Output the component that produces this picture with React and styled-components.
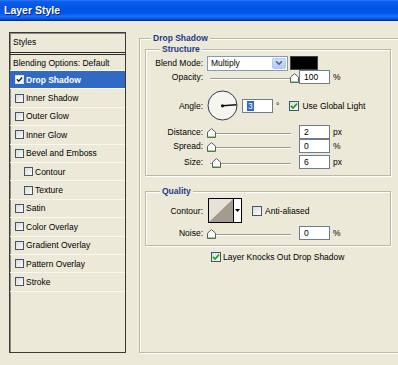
import React from "react";
import styled, { createGlobalStyle } from "styled-components";

const GlobalStyle = createGlobalStyle`
  body {
    margin: 0;
    background: #ece9d8;
    overflow: hidden;
  }
  * {
    box-sizing: border-box;
  }
`;

const styleItems = [
  { name: "Drop Shadow", checked: true, selected: true },
  { name: "Inner Shadow" },
  { name: "Outer Glow" },
  { name: "Inner Glow" },
  { name: "Bevel and Emboss" },
  { name: "Contour", indent: true },
  { name: "Texture", indent: true },
  { name: "Satin" },
  { name: "Color Overlay" },
  { name: "Gradient Overlay" },
  { name: "Pattern Overlay" },
  { name: "Stroke" },
];

function CheckBox({ checked, size = 10, onDark }) {
  return (
    <Box $size={size} $onDark={onDark}>
      {checked && (
        <svg width={size - 2} height={size - 2} viewBox="0 0 8 8">
          <path
            d="M1 3.8 L3.1 6 L7 1.6"
            fill="none"
            stroke={onDark ? "#222" : "#21a121"}
            strokeWidth="1.7"
          />
        </svg>
      )}
    </Box>
  );
}

function Slider({ pos }) {
  return (
    <SliderWrap>
      <Track />
      <Thumb style={{ left: 0 + pos * 83 }} width="9" height="10" viewBox="0 0 9 10">
        <path d="M0.5 9.5 V4.2 L4.5 0.6 L8.5 4.2 V9.5 Z" fill="#fff" stroke="#5b5b5b" />
        <path d="M1 9 H8" stroke="#3c9a3c" strokeWidth="1" />
      </Thumb>
    </SliderWrap>
  );
}

function SliderRow({ label, value, unit, pos, top }) {
  return (
    <Row $top={top}>
      <Label>{label}</Label>
      <Slider pos={pos} />
      <NumInput $gap={4}>{value}</NumInput>
      <Unit>{unit}</Unit>
    </Row>
  );
}

export default function App() {
  return (
    <Dialog>
      <GlobalStyle />
      <TitleBar>Layer Style</TitleBar>
      <Body>
        <StyleList>
          <ListHeader>Styles</ListHeader>
          <ListRow $height={16}>Blending Options: Default</ListRow>
          {styleItems.map((item) => (
            <ListRow
              key={item.name}
              $height={18.4}
              $indent={item.indent}
              $selected={item.selected}
            >
              <CheckBox size={9} checked={item.checked} onDark={item.selected} />
              {item.name}
            </ListRow>
          ))}
        </StyleList>

        <Frame>
          <Legend $left={6}>Drop Shadow</Legend>
          <Group $top={-1}>
            <Legend $left={14}>Structure</Legend>
            <Rows $pb={6}>
              <Row $top={1}>
                <Label>Blend Mode:</Label>
                <Select>
                  <span>Multiply</span>
                  <DropButton>
                    <svg width="8" height="6" viewBox="0 0 8 6">
                      <path d="M1 1.2 L4 4.2 L7 1.2" fill="none" stroke="#4d6185" strokeWidth="1.6" />
                    </svg>
                  </DropButton>
                </Select>
                <Swatch />
              </Row>
              <SliderRow label="Opacity:" value="100" unit="%" pos={1} />
              <Row $top={6} $height={31}>
                <Label>Angle:</Label>
                <Dial width="31" height="31" viewBox="0 0 31 31">
                  <circle cx="15.5" cy="15.5" r="14.5" fill="#f6f5f0" stroke="#2e3b52" />
                  <line x1="15.5" y1="15.8" x2="29.5" y2="14.8" stroke="#111" strokeWidth="1.5" />
                  <circle cx="15.5" cy="15.8" r="1.6" fill="#111" />
                </Dial>
                <NumInput $gap={4}>
                  <Selected>3</Selected>
                </NumInput>
                <Unit>°</Unit>
                <CheckLabel $gap={10}>
                  <CheckBox checked />
                  Use Global Light
                </CheckLabel>
              </Row>
              <SliderRow label="Distance:" value="2" unit="px" pos={0} top={4} />
              <SliderRow label="Spread:" value="0" unit="%" pos={0} />
              <SliderRow label="Size:" value="6" unit="px" pos={0.06} top={2} />
            </Rows>
          </Group>

          <Group $top={9}>
            <Legend $left={14}>Quality</Legend>
            <Rows $pb={5}>
              <Row $top={1} $height={25}>
                <Label>Contour:</Label>
                <ContourPicker>
                  <svg width="24" height="23" viewBox="0 0 24 23">
                    <rect width="24" height="23" fill="#e6e2d6" />
                    <path d="M0 23 L24 0 V23 Z" fill="#a39c8d" />
                  </svg>
                  <ContourArrow>
                    <svg width="5" height="3" viewBox="0 0 5 3">
                      <path d="M0 0 H5 L2.5 3 Z" fill="#000" />
                    </svg>
                  </ContourArrow>
                </ContourPicker>
                <CheckLabel $gap={10}>
                  <CheckBox />
                  Anti-aliased
                </CheckLabel>
              </Row>
              <SliderRow label="Noise:" value="0" unit="%" pos={0} top={3} />
            </Rows>
          </Group>

          <KnockRow>
            <CheckBox checked />
            Layer Knocks Out Drop Shadow
          </KnockRow>
        </Frame>
      </Body>
    </Dialog>
  );
}

const Dialog = styled.div`
  width: 398px;
  height: 365px;
  overflow: hidden;
  background: #ece9d8;
  font-family: "Liberation Sans", Arial, sans-serif;
  font-size: 8.5px;
  color: #000;
`;

const TitleBar = styled.div`
  height: 21px;
  display: flex;
  align-items: center;
  padding: 0 0 1px 4px;
  color: #fff;
  font-size: 10.5px;
  font-weight: bold;
  text-shadow: 1px 1px 0 #0a246a;
  border-bottom: 1px solid #0b2c8e;
  background: linear-gradient(
    to bottom,
    #2d7cf6 0%,
    #0a5ded 8%,
    #0054e3 40%,
    #0057e8 65%,
    #1c6ffc 82%,
    #0c60f2 90%,
    #003fc0 100%
  );
`;

const Body = styled.div`
  display: flex;
  align-items: flex-start;
  gap: 13px;
  padding: 11px 0 0 9px;
`;

const StyleList = styled.div`
  width: 117px;
  height: 321px;
  flex: none;
  display: flex;
  flex-direction: column;
  border: 1px solid #3a3a3a;
  box-shadow: inset 1px 1px 0 #8c8c84;
`;

const ListHeader = styled.div`
  height: 22px;
  display: flex;
  align-items: center;
  padding: 0 0 1px 3px;
  border-bottom: 3px double #2b2b2b;
`;

const ListRow = styled.div`
  height: ${(p) => p.$height}px;
  flex: none;
  display: flex;
  align-items: center;
  gap: 2px;
  padding-left: ${(p) => (p.$indent ? 14 : 5)}px;
  ${(p) => !p.$indent && p.$height === 16 && "padding-left: 3px;"}
  border-bottom: 1px solid #f8f7f0;
  background: ${(p) => (p.$selected ? "#316ac5" : "transparent")};
  color: ${(p) => (p.$selected ? "#fff" : "#000")};
  font-weight: ${(p) => (p.$selected ? "bold" : "normal")};
  white-space: nowrap;
`;

const Box = styled.span`
  width: ${(p) => p.$size}px;
  height: ${(p) => p.$size}px;
  flex: none;
  display: inline-flex;
  align-items: center;
  justify-content: center;
  border: 1px solid ${(p) => (p.$onDark ? "#dfe6f3" : "#3d5675")};
  background: ${(p) =>
    p.$onDark ? "#fff" : "linear-gradient(135deg, #dcdcd5 0%, #fafaf8 100%)"};
`;

const Frame = styled.fieldset`
  width: 266px;
  height: 321px;
  flex: none;
  margin: 0;
  padding: 0 0 0 5px;
  border: 1px solid #bcb8a8;
  box-shadow: 1px 1px 0 #fff, inset 1px 1px 0 #fff;
`;

const Group = styled.fieldset`
  width: 246px;
  margin: ${(p) => p.$top}px 0 0 0;
  padding: 0;
  border: 1px solid #bcb8a8;
  box-shadow: 1px 1px 0 #fff, inset 1px 1px 0 #fff;
`;

const Legend = styled.legend`
  margin-left: ${(p) => p.$left}px;
  padding: 0 2px;
  line-height: 12px;
  font-weight: bold;
  color: #1f3a8a;
  background: #ece9d8;
`;

const Rows = styled.div`
  display: flex;
  flex-direction: column;
  padding-bottom: ${(p) => p.$pb}px;
`;

const Row = styled.div`
  height: ${(p) => p.$height || 14}px;
  margin-top: ${(p) => p.$top || 0}px;
  display: flex;
  align-items: center;
  white-space: nowrap;
`;

const Label = styled.span`
  width: 57px;
  flex: none;
  text-align: right;
  margin-right: 4px;
`;

const Select = styled.div`
  width: 81px;
  height: 15px;
  flex: none;
  display: flex;
  align-items: center;
  justify-content: space-between;
  padding: 0 1px 0 3px;
  background: #fff;
  border: 1px solid #7f9db9;
`;

const DropButton = styled.span`
  width: 14px;
  height: 11px;
  display: flex;
  align-items: center;
  justify-content: center;
  border: 1px solid #b3c6f2;
  border-radius: 2px;
  background: linear-gradient(to bottom, #d4e0fb, #b5c8f6);
`;

const Swatch = styled.span`
  width: 28px;
  height: 14px;
  margin-left: 2px;
  flex: none;
  background: #000;
  border: 1px solid #444;
`;

const SliderWrap = styled.div`
  position: relative;
  width: 88px;
  height: 14px;
  flex: none;
`;

const Track = styled.div`
  position: absolute;
  left: 3px;
  right: 4px;
  top: 8px;
  height: 2px;
  border-top: 1px solid #9c9a90;
  border-bottom: 1px solid #fff;
`;

const Thumb = styled.svg`
  position: absolute;
  top: 3px;
`;

const NumInput = styled.span`
  width: 31px;
  height: 14px;
  flex: none;
  margin-left: ${(p) => p.$gap}px;
  display: flex;
  align-items: center;
  padding-left: 4px;
  background: #fff;
  border: 1px solid #6d7d8f;
`;

const Selected = styled.span`
  background: #316ac5;
  color: #fff;
  padding: 0 1px;
  line-height: 10px;
`;

const Unit = styled.span`
  margin-left: 3px;
`;

const Dial = styled.svg`
  flex: none;
`;

const CheckLabel = styled.span`
  display: flex;
  align-items: center;
  gap: 3px;
  margin-left: ${(p) => p.$gap}px;
`;

const ContourPicker = styled.div`
  width: 34px;
  height: 25px;
  flex: none;
  margin-left: 1px;
  display: flex;
  border: 1px solid #000;
  background: #fff;
`;

const ContourArrow = styled.span`
  flex: 1;
  display: flex;
  align-items: center;
  justify-content: center;
  border-left: 1px solid #000;
`;

const KnockRow = styled.div`
  height: 12px;
  margin-top: 5px;
  padding-left: 66px;
  display: flex;
  align-items: center;
  gap: 2px;
  white-space: nowrap;
`;
